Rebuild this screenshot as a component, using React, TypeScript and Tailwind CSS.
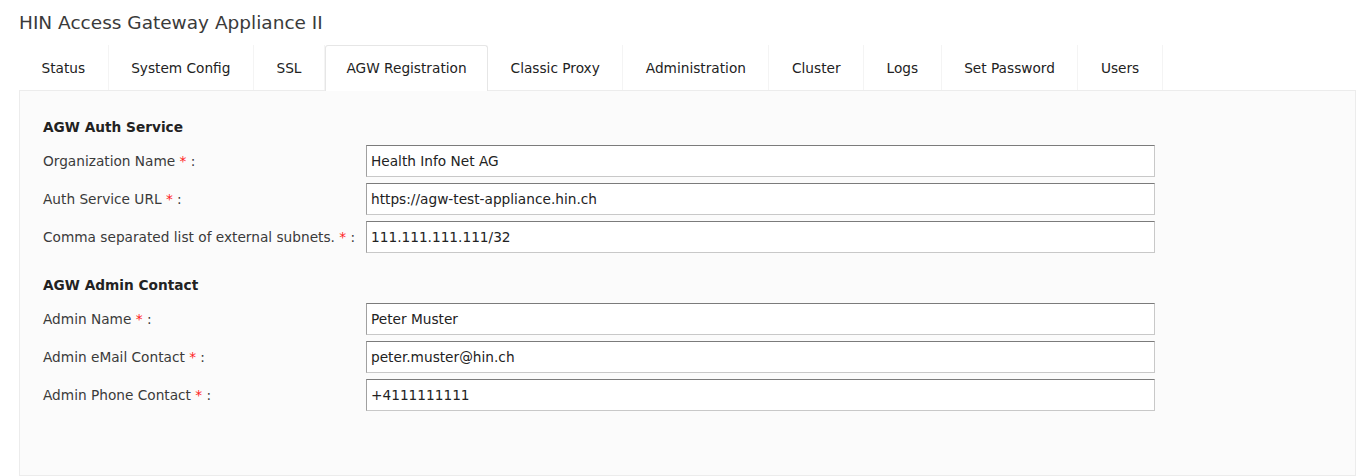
const tabs = [
  "Status",
  "System Config",
  "SSL",
  "AGW Registration",
  "Classic Proxy",
  "Administration",
  "Cluster",
  "Logs",
  "Set Password",
  "Users",
];

type Field = { label: string; value: string };

const authFields: Field[] = [
  { label: "Organization Name", value: "Health Info Net AG" },
  { label: "Auth Service URL", value: "https://agw-test-appliance.hin.ch" },
  { label: "Comma separated list of external subnets.", value: "111.111.111.111/32" },
];

const adminFields: Field[] = [
  { label: "Admin Name", value: "Peter Muster" },
  { label: "Admin eMail Contact", value: "peter.muster@hin.ch" },
  { label: "Admin Phone Contact", value: "+4111111111" },
];

function Row({ field }: { field: Field }) {
  return (
    <div className="flex h-[38px] items-center">
      <label className="w-[323px] shrink-0 text-[#3a3a3a]">
        {field.label} <span className="text-[#ff2020]">*</span> :
      </label>
      <input
        readOnly
        defaultValue={field.value}
        className="h-[32px] w-[789px] border border-[#c8c8c8] border-t-[#7b7b7b] border-l-[#a0a0a0] bg-white px-[4px] text-[13.7px] text-[#222] outline-none"
        style={{ fontFamily: "Tahoma, 'DejaVu Sans', sans-serif" }}
      />
    </div>
  );
}

export default function App() {
  return (
    <div
      className="min-h-[476px] bg-white pl-[19px] pr-[13px] text-[13.7px]"
      style={{ fontFamily: "Tahoma, 'DejaVu Sans', sans-serif" }}
    >
      <h1 className="pt-[10px] pb-[9px] text-[18.5px] leading-[25px] text-[#3a3a3a]">
        HIN Access Gateway Appliance II
      </h1>
      <div className="flex h-[46px] items-end">
        {tabs.map((t) => {
          const active = t === "AGW Registration";
          return (
            <div
              key={t}
              className={
                active
                  ? "relative -mb-px flex h-[46px] items-center rounded-t-[3px] border border-b-0 border-[#e6e6e6] bg-white px-[20.5px] text-[#222]"
                  : "flex h-[45px] items-center border-r border-[#f4f4f4] bg-white px-[22.5px] pt-[2px] text-[#222]"
              }
            >
              {t}
            </div>
          );
        })}
      </div>
      <div className="h-[386px] border border-[#ececec] bg-[#fbfbfb] px-[23px] pt-[28px]">
        <h2 className="mb-[7px] font-bold leading-[16px] text-[#222]">AGW Auth Service</h2>
        {authFields.map((f) => (
          <Row key={f.label} field={f} />
        ))}
        <h2 className="mt-[21px] mb-[7px] font-bold leading-[16px] text-[#222]">
          AGW Admin Contact
        </h2>
        {adminFields.map((f) => (
          <Row key={f.label} field={f} />
        ))}
      </div>
    </div>
  );
}
